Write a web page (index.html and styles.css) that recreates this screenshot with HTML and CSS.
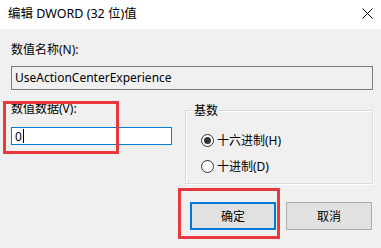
FILE: index.html
```html
<!DOCTYPE html>
<html lang="zh-CN">
<head>
<meta charset="utf-8">
<title>编辑 DWORD (32 位)值</title>
<link rel="stylesheet" href="styles.css">
</head>
<body>
<div class="window">
  <div class="titlebar">
    <span class="title">编辑 DWORD (32 位)值</span>
    <svg class="close" width="11" height="11" viewBox="0 0 11 11"><path d="M0.5 0.5 L10.5 10.5 M10.5 0.5 L0.5 10.5" stroke="#000" stroke-width="1" fill="none"/></svg>
  </div>
  <div class="content">
    <div class="label first">数值名称(N):</div>
    <div class="namebox">UseActionCenterExperience</div>
    <div class="row">
      <div class="leftcol">
        <div class="label second">数值数据(V):</div>
        <div class="databox"><span class="val">0</span><span class="caret"></span></div>
      </div>
      <div class="group">
        <div class="legend">基数</div>
        <div class="radio r1"><span class="dot checked"></span><span class="rtext">十六进制(H)</span></div>
        <div class="radio r2"><span class="dot"></span><span class="rtext">十进制(D)</span></div>
      </div>
    </div>
    <div class="buttons">
      <div class="btn ok">确定</div>
      <div class="btn cancel">取消</div>
    </div>
  </div>
  <div class="mark mark1"></div>
  <div class="mark mark2"></div>
</div>
</body>
</html>
```
FILE: styles.css
```css
html, body {
  margin: 0;
  padding: 0;
}
body {
  font-family: "Noto Sans", "Noto Sans CJK SC", sans-serif;
  font-size: 12px;
  color: #000;
  background: #f0f0f0;
}
.window {
  position: relative;
  width: 381px;
  height: 248px;
  overflow: hidden;
  background: #f0f0f0;
}
.titlebar {
  height: 29px;
  background: #fff;
  display: flex;
  align-items: center;
  justify-content: space-between;
  padding: 0 8px 0 8px;
  box-sizing: border-box;
}
.title {
  font-size: 12.5px;
  line-height: 16px;
  margin-top: -2px;
}
.close {
  margin-top: -3px;
}
.content {
  padding: 0 8px 0 11px;
}
.label {
  line-height: 16px;
}
.label.first {
  margin-top: 13px;
}
.namebox {
  margin-top: 8px;
  height: 24px;
  width: 362px;
  box-sizing: border-box;
  border: 1px solid #7a7a7a;
  background: #f0f0f0;
  padding-left: 3px;
  line-height: 21px;
}
.row {
  display: flex;
  align-items: flex-start;
}
.leftcol {
  width: 161px;
}
.label.second {
  margin-top: 11px;
}
.databox {
  margin-top: 10px;
  height: 18px;
  box-sizing: border-box;
  border: 1px solid #0a7ad8;
  background: #fff;
  padding-left: 3px;
  display: flex;
  align-items: center;
  line-height: 15px;
}
.caret {
  display: block;
  width: 1px;
  height: 14px;
  background: #000;
  margin-left: 1px;
}
.group {
  margin-top: 20px;
  margin-left: 13px;
  width: 188px;
  height: 74px;
  box-sizing: border-box;
  border: 1px solid #dcdcdc;
  box-shadow: inset 1px 1px 0 #fff, 1px 1px 0 #fff;
}
.legend {
  display: block;
  width: fit-content;
  height: 16px;
  margin-top: -8px;
  margin-left: 7px;
  padding: 0 1px;
  background: #f0f0f0;
  line-height: 16px;
}
.radio {
  display: flex;
  align-items: center;
  margin-left: 15px;
  height: 16px;
}
.r1 {
  margin-top: 13px;
}
.r2 {
  margin-top: 10px;
}
.dot {
  width: 13px;
  height: 13px;
  box-sizing: border-box;
  border: 1px solid #333;
  border-radius: 50%;
  background: #fff;
  display: flex;
  align-items: center;
  justify-content: center;
}
.dot.checked::after {
  content: "";
  width: 7px;
  height: 7px;
  border-radius: 50%;
  background: #333;
}
.rtext {
  margin-left: 3px;
}
.buttons {
  display: flex;
  justify-content: flex-end;
  gap: 10px;
  margin-top: 18px;
  padding-right: 1px;
}
.btn {
  width: 86px;
  height: 28px;
  box-sizing: border-box;
  background: #e1e1e1;
  border: 1px solid #adadad;
  display: flex;
  align-items: center;
  justify-content: center;
}
.btn.ok {
  border: 2px solid #0078d7;
}
.mark {
  position: absolute;
  border: 3px solid #e8383d;
  box-sizing: border-box;
}
.mark1 {
  left: 3px;
  top: 101px;
  width: 116px;
  height: 53px;
}
.mark2 {
  left: 178px;
  top: 188px;
  width: 102px;
  height: 51px;
}
```
